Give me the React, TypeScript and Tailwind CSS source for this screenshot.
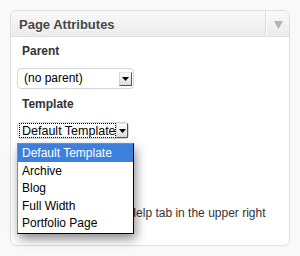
const font = { fontFamily: '"Lucida Grande", "Liberation Sans", Arial, sans-serif' };

const templates = ['Default Template', 'Archive', 'Blog', 'Full Width', 'Portfolio Page'];

function SelectArrow({ className }: { className: string }) {
  return (
    <div
      className={`${className} shrink-0 flex items-center justify-center bg-gradient-to-b from-[#ffffff] to-[#dcdcdc] border-r border-b border-r-[#555] border-b-[#555] border-l border-t border-l-[#d4d4d4] border-t-[#e8e8e8]`}
    >
      <svg width="7" height="4" viewBox="0 0 7 4">
        <path d="M0 0 L7 0 L3.5 4 Z" fill="#000" />
      </svg>
    </div>
  );
}

export default function App() {
  return (
    <div className="w-[300px] h-[256px] bg-[#f9f9f9] pt-[10px] pl-[10px]" style={font}>
      <div className="w-[280px] h-[236px] border border-[#dfdfdf] rounded-[6px] bg-white">
        {/* header */}
        <div className="flex h-[26px] border-b border-[#dfdfdf] rounded-t-[6px] bg-gradient-to-b from-[#f9f9f9] to-[#ececec]">
          <h3 className="flex-1 pl-[8px] pt-[1px] leading-[25px] text-[13px] font-bold text-[#464646] [text-shadow:0_1px_0_#fff]">
            Page Attributes
          </h3>
          <div className="w-[23px] flex items-start justify-center pt-[10px] border-l border-l-[#fff] shadow-[-1px_0_0_#dcdcdc]">
            <svg width="9" height="8" viewBox="0 0 9 8">
              <path d="M0 0 L9 0 L4.5 8 Z" fill="#b4b4b4" />
            </svg>
          </div>
        </div>

        {/* body */}
        <div className="pl-[6px] pr-[11px]">
          <p className="pl-[5px] pt-[7px] leading-[15px] text-[12px] font-bold text-[#333]">Parent</p>
          <div className="mt-[9px] w-[117px] h-[21px] flex items-center justify-between pl-[6px] pr-[1px] border border-[#d6d6d6] rounded-[4px] bg-white">
            <span className="text-[12px] leading-[19px] text-black">(no parent)</span>
            <SelectArrow className="w-[13px] h-[14px]" />
          </div>

          <p className="pl-[5px] mt-[8px] leading-[15px] text-[12px] font-bold text-[#333]">Template</p>
          <div className="relative mt-[10px] w-[112px] h-[17px] flex items-start pl-[1px] border border-[#d6d6d6] rounded-[4px] bg-white">
            <div className="w-[98px] h-[15px] border border-dotted border-black overflow-hidden">
              <span className="block pl-[2px] leading-[14px] text-[12.5px] text-black whitespace-nowrap">Default Template</span>
            </div>
            <SelectArrow className="w-[12px] h-[15px]" />

            {/* open menu */}
            <ul className="absolute z-10 left-[-1px] top-[20px] w-[117px] h-[91px] flex flex-col bg-white border border-[#888] border-r-black border-b-black shadow-[2px_5px_10px_rgba(0,0,0,0.45)]">
              {templates.map((t, i) => (
                <li
                  key={t}
                  className={
                    i === 0
                      ? 'h-[17.5px] leading-[19px] pl-[4px] text-[12px] text-white bg-[#3d7fdf] overflow-hidden'
                      : 'h-[17.5px] leading-[19px] pl-[4px] text-[12px] text-black overflow-hidden'
                  }
                >
                  {t}
                </li>
              ))}
            </ul>
          </div>

          <p className="pl-[1px] mt-[67px] leading-[14px] text-[12px] text-[#333]">
            Need help? Use the Help tab in the upper right of your screen.
          </p>
        </div>
      </div>
    </div>
  );
}
